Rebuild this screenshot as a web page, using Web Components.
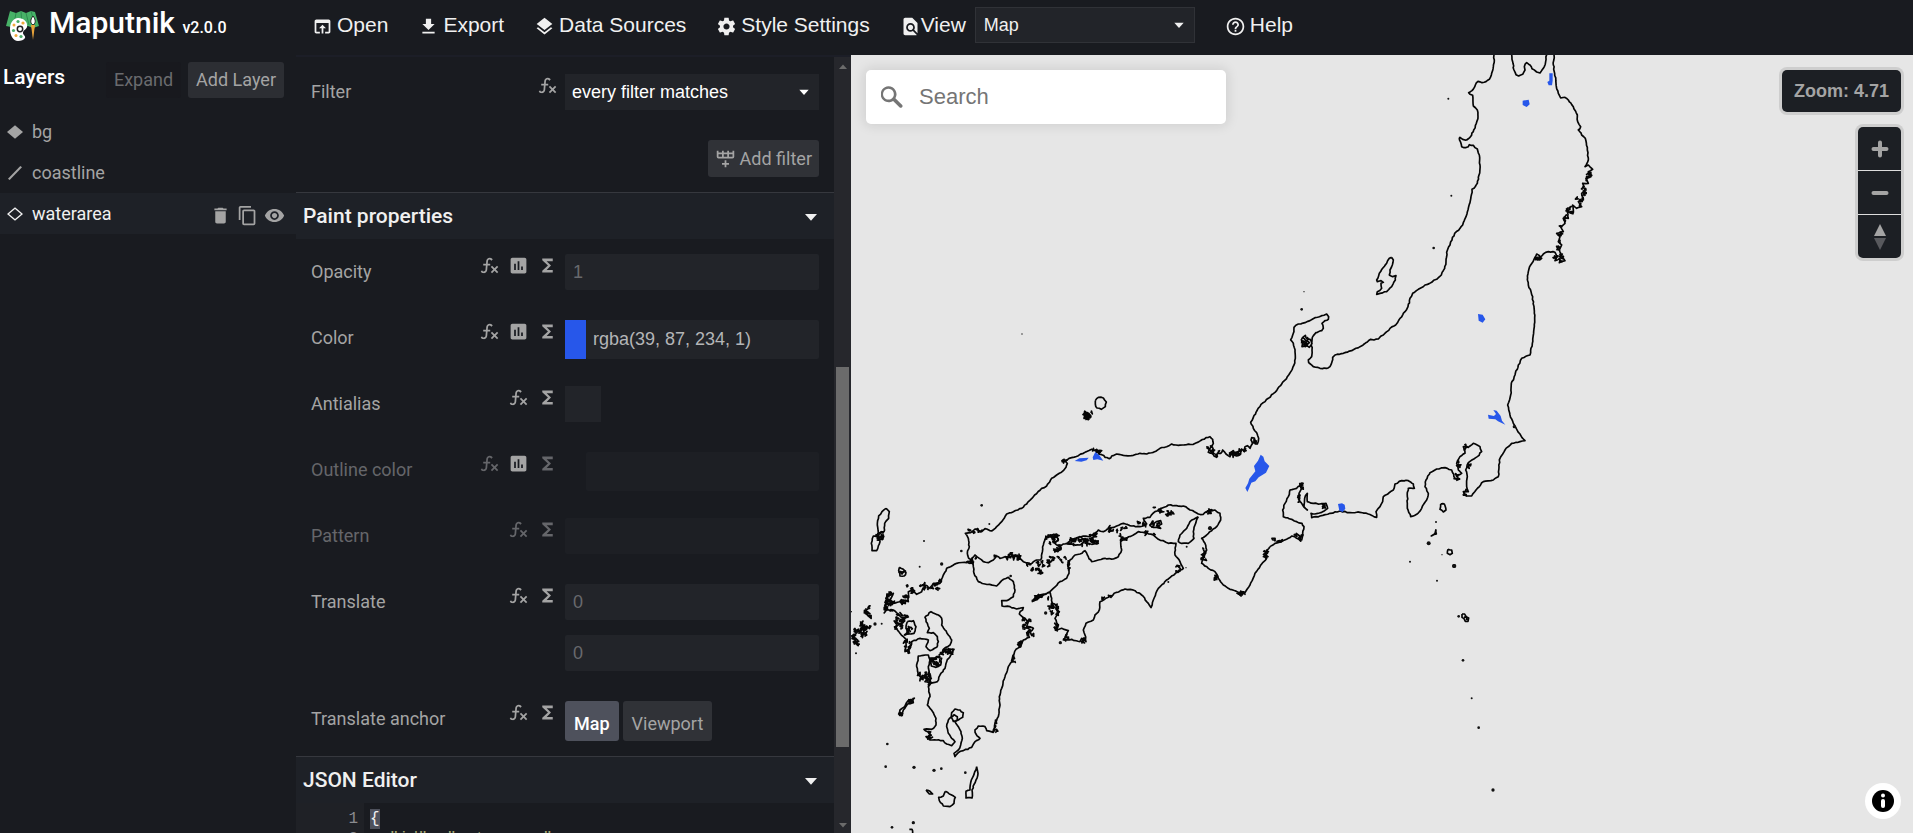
<!DOCTYPE html>
<html lang="en">
<head>
<meta charset="utf-8">
<title>Maputnik</title>
<style>
  html, body { height: 100%; }
  body { margin: 0; background: #191b20; color: #a4a4a4; font: 18px/24px Roboto, sans-serif; overflow: hidden; }
</style>
</head>
<body>
<maputnik-app></maputnik-app>
<script>
const ICONS = {
  open: 'M19 4H5c-1.11 0-2 .9-2 2v12c0 1.1.89 2 2 2h4v-2H5V8h14v10h-4v2h4c1.1 0 2-.9 2-2V6c0-1.1-.89-2-2-2zm-7 6l-4 4h3v6h2v-6h3l-4-4z',
  download: 'M19 9h-4V3H9v6H5l7 7 7-7zM5 18v2h14v-2H5z',
  layers: 'M11.99 18.54l-7.37-5.73L3 14.07l9 7 9-7-1.63-1.27-7.38 5.74zM12 16l7.36-5.73L21 9l-9-7-9 7 1.63 1.27L12 16z',
  settings: 'M19.43 12.98c.04-.32.07-.64.07-.98s-.03-.66-.07-.98l2.11-1.65c.19-.15.24-.42.12-.64l-2-3.46c-.12-.22-.39-.3-.61-.22l-2.49 1c-.52-.4-1.08-.73-1.69-.98l-.38-2.65C14.46 2.18 14.25 2 14 2h-4c-.25 0-.46.18-.49.42l-.38 2.65c-.61.25-1.17.59-1.69.98l-2.49-1c-.23-.09-.49 0-.61.22l-2 3.46c-.13.22-.07.49.12.64l2.11 1.65c-.04.32-.07.65-.07.98s.03.66.07.98l-2.11 1.65c-.19.15-.24.42-.12.64l2 3.46c.12.22.39.3.61.22l2.49-1c.52.4 1.08.73 1.69.98l.38 2.65c.03.24.24.42.49.42h4c.25 0 .46-.18.49-.42l.38-2.65c.61-.25 1.17-.59 1.69-.98l2.49 1c.23.09.49 0 .61-.22l2-3.46c.12-.22.07-.49-.12-.64l-2.11-1.65zM12 15.5c-1.93 0-3.5-1.57-3.5-3.5s1.57-3.5 3.5-3.5 3.5 1.57 3.5 3.5-1.57 3.5-3.5 3.5z',
  find: 'M20 19.59V8l-6-6H6c-1.1 0-1.99.9-1.99 2L4 20c0 1.1.89 2 1.99 2H18c.45 0 .85-.15 1.19-.4l-4.43-4.43c-.8.52-1.74.83-2.76.83-2.76 0-5-2.24-5-5s2.24-5 5-5 5 2.24 5 5c0 1.02-.31 1.96-.83 2.75L20 19.59zM9 13c0 1.66 1.34 3 3 3s3-1.34 3-3-1.34-3-3-3-3 1.34-3 3z',
  help: 'M11 18h2v-2h-2v2zm1-16C6.48 2 2 6.48 2 12s4.48 10 10 10 10-4.48 10-10S17.52 2 12 2zm0 18c-4.41 0-8-3.59-8-8s3.59-8 8-8 8 3.59 8 8-3.59 8-8 8zm0-14c-2.21 0-4 1.79-4 4h2c0-1.1.9-2 2-2s2 .9 2 2c0 2-3 1.75-3 5h2c0-2.25 3-2.5 3-5 0-2.21-1.79-4-4-4z',
  trash: 'M6 19c0 1.1.9 2 2 2h8c1.1 0 2-.9 2-2V7H6v12zM19 4h-3.5l-1-1h-5l-1 1H5v2h14V4z',
  copy: 'M16 1H4c-1.1 0-2 .9-2 2v14h2V3h12V1zm3 4H8c-1.1 0-2 .9-2 2v14c0 1.1.9 2 2 2h11c1.1 0 2-.9 2-2V7c0-1.1-.9-2-2-2zm0 16H8V7h11v14z',
  eye: 'M12 4.5C7 4.5 2.73 7.61 1 12c1.73 4.39 6 7.5 11 7.5s9.27-3.11 11-7.5c-1.73-4.39-6-7.5-11-7.5zM12 17c-2.76 0-5-2.24-5-5s2.24-5 5-5 5 2.24 5 5-2.24 5-5 5zm0-8c-1.66 0-3 1.34-3 3s1.34 3 3 3 3-1.34 3-3-1.34-3-3-3z',
  sigma: 'M18 4H6v2l6.5 6L6 18v2h12v-3h-7l5-5-5-5h7z',
  chart: 'M19 3H5c-1.1 0-2 .9-2 2v14c0 1.1.9 2 2 2h14c1.1 0 2-.9 2-2V5c0-1.1-.9-2-2-2zM9 17H7v-7h2v7zm4 0h-2V7h2v10zm4 0h-2v-4h2v4z',
  fx: 'M12.42 5.29C11.32 5.19 10.35 6 10.25 7.11L10 10H12.82V12H9.82L9.38 17.07C9.18 19.27 7.24 20.9 5.04 20.7C3.79 20.59 2.66 19.9 2 18.83L3.5 17.33C3.83 18.38 4.96 18.97 6 18.63C6.78 18.39 7.33 17.7 7.4 16.89L7.82 12H4.82V10H8L8.27 6.93C8.46 4.73 10.39 3.1 12.6 3.28C13.86 3.39 15 4.09 15.66 5.17L14.16 6.67C13.91 5.9 13.23 5.36 12.42 5.29M22 13.65L20.59 12.24L17.76 15.07L14.93 12.24L13.5 13.65L16.35 16.5L13.5 19.31L14.93 20.72L17.76 17.89L20.59 20.72L22 19.31L19.17 16.5L22 13.65Z',
  rowplus: 'M22 10A2 2 0 0 1 20 12H4A2 2 0 0 1 2 10V3H4V5H8V3H10V5H14V3H16V5H20V3H22V10M4 10H8V7H4V10M10 10H14V7H10V10M20 10V7H16V10H20M11 14H13V17H16V19H13V22H11V19H8V17H11V14Z',
  background: 'M12 2L24 12 12 22 0 12z',
  line: 'M20 1.500L22.500 3.500 4 22.500 1.500 20.500z',
  fill: 'M12 2L24 12 12 22 0 12zM12 4.500L3 12 12 19.500 21 12z',
  search: 'M7.400 1.200a8 8 0 0 1 7 12l6.800 6.800a1.800 1.800 0 0 1-2.500 2.500l-6.600-6.600a8 8 0 1 1-4.700-14.700zm0 2.600a5.400 5.400 0 1 0 .1 0z',
  down: 'M4 8h16l-8 9z'
};
const icon = (name, size, cls = '') =>
  `<svg class="${cls}" width="${size}" height="${size}" viewBox="0 0 24 24" aria-hidden="true"><path fill="currentColor" fill-rule="evenodd" d="${ICONS[name]}"/></svg>`;

const BASE = `
  *, *::before, *::after { box-sizing: border-box; }
  button, input, select { font: inherit; color: inherit; margin: 0; border: 0; outline: 0; padding: 0; background: none; border-radius: 0; }
  svg { display: block; flex: none; }
  a { color: inherit; text-decoration: none; }
  h1, h2 { margin: 0; font-weight: 500; }
  select { appearance: none; }
`;

class BaseElement extends HTMLElement {
  connectedCallback() {
    if (this.shadowRoot) return;
    this.attachShadow({ mode: 'open' }).innerHTML = `<style>${BASE}${this.styles()}</style>${this.markup()}`;
  }
  styles() { return ''; }
  markup() { return '<slot></slot>'; }
}

customElements.define('maputnik-app', class extends BaseElement {
  styles() { return `
    :host { display: grid; grid-template: 55px minmax(0, 1fr) / 296px 555px minmax(0, 1fr); height: 100vh; }
    app-toolbar { grid-column: 1 / -1; }
  `; }
  markup() { return `
    <app-toolbar></app-toolbar>
    <layer-list></layer-list>
    <layer-editor></layer-editor>
    <map-view></map-view>
  `; }
});

customElements.define('toolbar-button', class extends BaseElement {
  styles() { return `
    :host { display: block; }
    button, a { display: flex; align-items: center; gap: 4px; padding: 0 15px; height: 50px; white-space: nowrap; cursor: pointer; }
    svg { margin-top: 3px; }
  `; }
  markup() {
    const tag = this.hasAttribute('href') ? ['a href="#help"', 'a'] : ['button type="button"', 'button'];
    return `<${tag[0]}>${icon(this.getAttribute('icon'), 21)}<span><slot></slot></span></${tag[1]}>`;
  }
});

customElements.define('app-toolbar', class extends BaseElement {
  styles() { return `
    :host { display: flex; align-items: flex-start; height: 55px; color: #f0f0f0; font: 21px/24px "Liberation Sans", sans-serif; }
    .brand { display: flex; width: 297px; flex: none; align-items: center; padding: 6px 0 0 5px; gap: 9px; color: #fff; font-family: Roboto, sans-serif; }
    h1 { font-size: 30px; line-height: 34px; white-space: nowrap; }
    h1 small { font-size: 16px; }
    .view { display: flex; align-items: center; height: 50px; padding: 0 15px; gap: 9px; }
    .view svg { margin-top: 3px; }
    .view label { display: flex; align-items: center; }
    .box { position: relative; width: 220px; height: 36px; color: #f0f0f0; }
    .box select { width: 100%; height: 100%; padding: 0 8px; background: #222429; border: 1px solid #303237; font-size: 18px; }
    .box svg { position: absolute; right: 9px; top: 11px; margin: 0; }
  `; }
  markup() { return `
    <a class="brand" href="#maputnik">
      <svg width="35" height="31" viewBox="0 0 35 31" aria-hidden="true">
        <path fill="#47b267" d="M5 1l6 2 5-2 5 2 5-2 4 1 4 14-6 2-5-2-6 2-6-2-5 1-5-1z"/>
        <path stroke="#2f8a50" fill="none" d="M11 3L9 14M16 1l1 15M21 3l3 12M26 1l4 15"/>
        <path fill="#fff" d="M13 8c6 0 10 4 9 9-1 3-4 3-4 6 0 2 3 3 2 5-1 2-4 3-7 3C8 31 5 25 5 19 5 12 9 8 13 8z"/>
        <circle cx="15" cy="19" r="2.700" fill="#fff" stroke="#222" stroke-width="1.500"/>
        <g fill="#4aae68"><circle cx="13" cy="11.500" r="1.600"/><circle cx="8.500" cy="20.500" r="1.600"/><circle cx="16" cy="26.500" r="1.600"/></g>
        <g fill="#f0a93c"><circle cx="18" cy="13" r="1.600"/><circle cx="9" cy="15" r="1.500"/><circle cx="11" cy="25.500" r="1.500"/></g>
        <path fill="#fff" stroke="#222" d="M28 6c3 4 3 7 0 9-3-2-3-5 0-9z"/>
        <path fill="#e8a33a" d="M26 15h4l-2 15z"/>
      </svg>
      <h1>Maputnik <small>v2.0.0</small></h1>
    </a>
    <toolbar-button icon="open">Open</toolbar-button>
    <toolbar-button icon="download">Export</toolbar-button>
    <toolbar-button icon="layers">Data Sources</toolbar-button>
    <toolbar-button icon="settings">Style Settings</toolbar-button>
    <div class="view">
      <label for="view">${icon('find', 21)}View</label>
      <span class="box"><select id="view"><option>Map</option><option>Inspect</option></select>${icon('down', 14)}</span>
    </div>
    <toolbar-button icon="help" href>Help</toolbar-button>
  `; }
});

customElements.define('layer-item', class extends BaseElement {
  styles() { return `
    :host { display: flex; align-items: center; height: 41px; padding: 0 11px 0 7px; gap: 9px; }
    :host([selected]) { background: #1e2127; color: #f0f0f0; }
    .name { flex: 1; text-align: left; line-height: 24px; }
    .actions { display: flex; gap: 6px; color: #a4a4a4; margin-top: 3px; }
  `; }
  markup() {
    const s = this.hasAttribute('selected');
    const acts = [['trash', 'Delete'], ['copy', 'Duplicate'], ['eye', 'Hide']];
    return `${icon(this.getAttribute('icon'), 16)}
      <button type="button" class="name"><slot></slot></button>
      ${s ? `<span class="actions">${acts.map(a => `<button type="button" aria-label="${a[1]}">${icon(a[0], 21)}</button>`).join('')}</span>` : ''}`;
  }
});

customElements.define('layer-list', class extends BaseElement {
  styles() { return `
    :host { display: block; min-width: 0; }
    header { display: flex; align-items: center; gap: 7px; padding: 7px 12px 13px 3px; }
    h2 { flex: 1; color: #fff; font-size: 21px; line-height: 24px; margin-top: -6px; }
    header button { height: 36px; padding: 0 8px; border-radius: 3px; background: #2c2e33; }
    header button.quiet { background: #18191e; color: #6a6b6e; }
  `; }
  markup() { return `
    <header><h2>Layers</h2><button type="button" class="quiet">Expand</button><button type="button">Add Layer</button></header>
    <layer-item icon="background">bg</layer-item>
    <layer-item icon="line">coastline</layer-item>
    <layer-item icon="fill" selected>waterarea</layer-item>
  `; }
});

customElements.define('editor-section', class extends BaseElement {
  styles() { return `
    :host { display: block; border-top: 1px solid #36383e; }
    button { display: flex; width: 100%; height: 46px; align-items: center; justify-content: space-between; padding: 0 14px 0 7px; background: #1e2127; color: #f0f0f0; font-size: 21px; line-height: 24px; font-weight: 500; }
    svg { margin-top: 2px; }
  `; }
  markup() { return `<button type="button" aria-expanded="true"><span>${this.getAttribute('heading')}</span>${icon('down', 18)}</button><slot></slot>`; }
});

customElements.define('field-row', class extends BaseElement {
  styles() { return `
    :host { display: grid; grid-template-columns: minmax(0, 1fr) auto 254px; padding: 15px; min-height: 66px; align-items: start; }
    .label { line-height: 36px; }
    .tools { display: flex; padding-right: 3px; }
    .tools button { width: 29px; height: 22px; display: grid; place-items: center; }
    .control { display: flex; gap: 4px; min-width: 0; font-family: "Liberation Sans", sans-serif; }
    .stack { flex-direction: column; gap: 15px; }
    input:not([type=checkbox]) { width: 100%; min-width: 0; height: 36px; padding: 0 8px; background: #222429; border-radius: 2px; }
    input::placeholder { color: #68696d; opacity: 1; }
    input[type=checkbox] { appearance: none; width: 36px; height: 36px; background: #222429; }
    .color { gap: 0; height: 36px; }
    .color i { width: 21px; height: 39px; background: #2757ea; flex: none; }
    .color.none i { background: none; }
    .color input:not([type=checkbox]) { height: 39px; color: #b4b5b7; padding-left: 7px; }
    .box { position: relative; width: 100%; height: 36px; color: #fff; }
    .box select { width: 100%; height: 100%; padding: 0 7px; background: #222429; }
    .box svg { position: absolute; right: 8px; top: 11px; }
    .choice { font-family: Roboto, sans-serif; }
    .choice button { height: 40px; padding: 5px 9px 0; border-radius: 3px; background: #303237; color: #a4a4a4; }
    .choice button[aria-pressed=true] { background: #4e515c; color: #fff; font-weight: 500; }
    :host([dim]) .label, :host([dim]) .tools button { color: #65666a; }
    :host([dim]) .tools .chart { color: #a4a4a4; }
    :host([dim]) input:not([type=checkbox]) { background: #1d1f24; }
  `; }
  markup() {
    const label = this.getAttribute('label');
    const kind = this.getAttribute('kind');
    const value = this.getAttribute('value') || '';
    const names = { fx: 'Zoom function', chart: 'Data function', sigma: 'Expression' };
    const tools = this.getAttribute('tools').split(' ')
      .map(t => `<button type="button" class="${t}" aria-label="${names[t]}">${icon(t, 21)}</button>`).join('');
    const controls = {
      number: `<div class="control"><input id="c" inputmode="decimal" placeholder="${value}"></div>`,
      text: `<div class="control"><input id="c" type="text"></div>`,
      pair: `<div class="control stack"><input id="c" inputmode="decimal" placeholder="0"><input aria-label="${label} y" inputmode="decimal" placeholder="0"></div>`,
      check: `<div class="control"><input id="c" type="checkbox"></div>`,
      color: `<div class="control color ${value ? '' : 'none'}"><i></i><input id="c" type="text" value="${value}"></div>`,
      select: `<div class="control"><span class="box"><select id="c"><option>${value}</option></select>${icon('down', 14)}</span></div>`,
      choice: `<div class="control choice" id="c" role="group" aria-label="${label}"><button type="button" aria-pressed="true">Map</button><button type="button" aria-pressed="false">Viewport</button></div>`
    };
    const caption = kind === 'choice' ? `<span class="label">${label}</span>` : `<label class="label" for="c">${label}</label>`;
    return `${caption}<span class="tools">${tools}</span>${controls[kind]}`;
  }
});

customElements.define('code-editor', class extends BaseElement {
  styles() { return `
    :host { display: block; height: 60px; overflow: hidden; background: linear-gradient(90deg, #1f2126 68px, #191b20 68px); font: 16px/20px "Liberation Mono", monospace; }
    ol { margin: 0; padding: 6px 0 0; list-style: none; }
    li { display: grid; grid-template-columns: 62px 1fr; column-gap: 12px; white-space: pre; }
    .n { text-align: right; color: #8a8b8f; }
    .cursor { display: inline-block; background: #4e515c; color: #f0f0f0; }
    .str { color: #a5a672; }
  `; }
  markup() { return `<ol>
    <li><span class="n">1</span><code-line><span class="cursor">{</span></code-line></li>
    <li><span class="n">2</span><code-line>  <span class="str">"id"</span>: <span class="str">"waterarea"</span>,</code-line></li>
  </ol>`; }
});
customElements.define('code-line', class extends BaseElement {
  styles() { return ':host { display: block; }'; }
});

customElements.define('layer-editor', class extends BaseElement {
  styles() { return `
    :host { display: flex; min-width: 0; overflow: hidden; border-top: 2px solid #1c1e27; }
    .pane { flex: 1; min-width: 0; overflow: hidden; padding-top: 2px; }
    .add { display: flex; justify-content: flex-end; padding: 15px; }
    .add button { display: flex; align-items: center; gap: 4px; height: 37px; padding: 0 7px; border-radius: 3px; background: #303237; }
    .bar { width: 17px; background: #26272c; display: grid; grid-template-rows: 16px 294px 380px 1fr 16px; justify-items: center; color: #6b6b6b; }
    .bar i { grid-row: 3; width: 13px; background: #6b6b6b; }
    .bar .up { transform: rotate(180deg); margin-top: 4px; }
    .bar .dn { grid-row: 5; margin-top: 2px; }
  `; }
  markup() { return `
    <div class="pane">
      <field-row label="Filter" kind="select" value="every filter matches" tools="fx"></field-row>
      <div class="add"><button type="button">${icon('rowplus', 21)}Add filter</button></div>
      <editor-section heading="Paint properties">
        <field-row label="Opacity" kind="number" value="1" tools="fx chart sigma"></field-row>
        <field-row label="Color" kind="color" value="rgba(39, 87, 234, 1)" tools="fx chart sigma"></field-row>
        <field-row label="Antialias" kind="check" tools="fx sigma"></field-row>
        <field-row label="Outline color" kind="color" tools="fx chart sigma" dim></field-row>
        <field-row label="Pattern" kind="text" tools="fx sigma" dim></field-row>
        <field-row label="Translate" kind="pair" tools="fx sigma"></field-row>
        <field-row label="Translate anchor" kind="choice" tools="fx sigma"></field-row>
      </editor-section>
      <editor-section heading="JSON Editor"><code-editor></code-editor></editor-section>
    </div>
    <div class="bar">${icon('down', 12, 'up')}<i></i>${icon('down', 12, 'dn')}</div>
  `; }
});

// Coast geometry, grouped by survey sheet; each sheet has its own origin at one third scale.
const SHEETS = [
  { at: [1280, 50], lines: [
    '642 14 643 30 640 50 634 75 628 88 618 95 606 98 594 94 586 105 576 122 566 128 570 133 578 136 580 168 592 180 594 200 589 220 580 245 570 262 560 270 548 268 540 262 538 265 545 290 552 293 565 290 568 284 580 286 592 297 598 315 600 345 597 375 592 400 582 415 576 418 573 440 570 458 566 470 558 500 548 525 540 535 524 550 516 570 510 585 500 607 498 635 494 655 484 675 470 688 455 697 435 705 415 718 398 730 390 745 384 770 375 785 360 805 347 825 330 835 310 855 295 867 282 870 272 868 262 876 240 890 215 902 190 910 165 915 158 922 156 935 150 950 140 955 120 955 100 950 86 938 85 930 95 920 96 900 95 880 97 862 108 848 125 842 130 835 126 820 135 812 145 808 146 800 140 792 125 797 105 803 90 812 75 818 55 822 42 832 40 850 36 862 32 870 40 880 45 905 46 925 42 945 36 960',
    '742 690 745 665 752 645 762 628 770 612 780 620 785 625 772 630 790 612 805 605 825 607 830 620 825 632 840 625 838 638 855 632 845 618 838 600 845 585 835 575 840 560 830 550 850 545 842 530 855 520 850 505 865 505 862 485 880 488 878 465 890 475 905 470 895 455 910 450 905 430 915 420 908 400 925 400 918 385 933 380 925 365 938 358 925 345 915 350 925 330 922 300 916 265 905 255 895 240 902 230 893 215 892 195 880 170 865 150 855 142 842 144 835 130 828 100 824 70 820 45 822 14',
    '695 14 698 35 702 60 708 74 716 78 728 73 735 60 733 50 740 38 750 45 756 56 770 66 780 69 790 55 797 35 800 14',
    '335 622 340 630 337 645 330 660 328 675 338 680 348 677 346 690 335 710 320 725 300 730 290 733 292 725 305 715 303 700 310 697 303 692 292 695 290 690 298 670 308 655 320 640 328 625 335 622',
    '68 862 76 856 80 866 90 868 96 880 88 892 80 886 66 890 70 876 64 870 68 862 88 878 72 884 84 870'
  ], busy: [[838,622,14,14,6],[770,622,8,7,2],[925,375,8,18,6],[912,415,6,18,5],[900,455,10,12,6],[870,482,9,10,5],[858,505,6,10,3],[845,540,6,14,3],[838,585,5,16,4],[78,876,10,12,6]],
    dots: [[505,146,3],[514,437,3],[461,594,4],[72,725,2],[65,778,4]] },
  { at: [1200, 280], lines: [
    '276 270 262 290 245 312 225 337 205 355 183 373 172 390 160 412 152 427 160 445 170 458 176 475 172 492 166 492 163 474 155 473 153 480 158 490 150 505 142 497 135 500 133 515 125 507 122 522 110 528 100 525 95 518 90 530 78 522 68 510 62 520 52 520 50 532 42 528 38 520 25 517 28 508 40 490 38 478 30 470 18 473 0 483',
    '210 800 225 790 245 785 265 775 275 768 290 775 305 780 308 760 312 740 306 730 290 725 275 718 250 710 248 690 255 670 265 650 270 630 290 625 305 612 305 625 297 640 298 660 308 675 322 690 312 680 314 655 322 640 322 665 340 670 360 672 378 670 383 685 365 697 345 702 333 700 335 713 360 708 390 700 420 693 450 698 480 697 505 702 530 712 528 695 540 680 548 665 550 650 580 630 585 612 605 602 625 602 640 612 643 625 625 625 622 650 622 685 632 710 650 703 665 685 680 660 685 640 675 620 678 600 690 578 710 567 735 563 755 570 765 595 775 598 772 585 785 580 775 570 770 550 780 530 795 520 790 500 805 502 820 490 840 500 845 515 832 530 805 548 797 570 802 590 800 620 805 635 790 635 800 648 815 648 828 630 850 605 880 600 895 590 897 560 900 535 915 510 935 490 960 485 975 482 960 462 943 435 930 405 923 375 932 345 934 310 945 285 955 255 965 235 990 225 997 190 1003 140 1003 100 998 50 985 15 982 0',
    '722 672 733 672 738 690 730 696 720 688 722 672', '744 808 755 810 757 820 750 824 742 820 744 808', '708 748 709 762 700 764 694 768 705 760 708 748'
  ], busy: [[105,522,12,7,6],[45,518,14,9,4],[130,510,9,7,3],[160,485,7,9,3],[300,618,7,8,5],[295,772,11,7,6],[200,825,6,16,4],[375,680,6,9,4],[300,655,5,14,3],[770,592,7,7,4],[797,638,7,5,3],[125,940,7,4,4],[30,697,10,5,3],[12,825,5,20,4],[775,550,5,16,3],[797,505,7,8,3],[238,782,20,3,3],[806,555,5,8,2]],
    dots: [[943,440,5],[708,726,3],[686,790,6],[726,824,2],[763,858,6],[630,845,3],[711,902,3],[30,744,5]] },
  { at: [850, 380], lines: [
    '1050 183 1030 193 1010 194 985 196 965 192 950 200 930 205 910 217 890 222 870 220 850 226 820 226 800 222 785 228 778 236 765 232 755 224 745 222 755 212 740 213 725 208 712 214 700 220 685 227 665 233 645 242 652 250 648 262 640 272 620 285 605 295 590 318 575 325 550 350 530 372 515 385 490 395 470 402 455 425 440 440 425 453 405 446 395 455 375 447 362 458 346 460 355 475 358 500 352 520 356 535 365 540 375 525 388 535 400 545 415 548 430 540 440 528 450 535 465 530 480 532 495 525 510 535 520 545 540 552 550 545 560 540 572 540 576 520 580 495 585 478 600 465 620 462 625 480 615 490 630 500 640 492 660 490 680 475 700 468 720 470 735 460 745 450 760 455 780 445 800 438 820 430 845 438 870 440 890 432 880 415 900 412 915 395 935 385 955 375 980 377 1000 378 1020 390 1045 402 1060 403 1075 392 1095 390 1110 400 1112 420 1100 440 1085 452 1070 465 1055 475 1065 490 1070 510 1060 530 1055 550 1075 565 1095 575 1105 595 1120 615 1140 628 1170 638 1185 638 1200 615 1215 580 1235 552 1250 535 1245 520 1260 500',
    '545 662 565 647 600 637 605 655 607 670 625 680 620 690 628 695 615 715 625 735 620 750 635 745 655 752 650 765 640 780 665 778 690 785 695 775 708 785 705 765 700 750 708 730 730 720 735 705 748 690 750 665 775 652 800 637 825 627 855 632 875 645 895 670 903 683 910 660 925 625 950 600 985 575 1000 565 990 545 975 525 978 490 955 490 940 482 925 478 910 465 890 458 865 455 850 465 830 475 812 485 815 510 805 530 790 537 765 535 745 540 725 545 715 530 705 512 690 522 675 525 660 540 655 560 657 580 650 595 630 605 610 625 600 635 575 650 545 665',
    '1045 410 1035 435 1030 455 1032 475 1015 490 995 490 985 485 990 465 1010 445 1020 425 1045 410',
    '898 435 915 428 932 422 935 432 922 438 932 445 905 440 898 435', '650 492 665 478 690 470 705 482 690 495 650 492',
    '108 385 118 395 116 415 104 430 102 455 86 460 82 435 86 408 96 395 108 385', '70 468 84 466 90 485 80 512 66 512 64 490 70 468 88 472 100 465 98 478 80 480',
    '736 62 745 52 760 54 769 66 766 80 754 88 741 84 736 72 736 62', '148 562 160 568 168 578 162 588 150 588 146 572 148 562'
  ], busy: [[712,107,11,10,20],[612,478,14,14,12],[622,505,9,10,8],[690,485,28,11,18],[730,475,14,15,16],[580,550,22,10,9],[565,572,12,9,5],[620,540,28,8,8],[495,530,16,8,7],[540,562,12,9,4],[800,450,30,10,7],[820,470,9,9,4],[875,430,12,10,6],[915,435,18,9,6],[960,400,11,4,6],[925,388,20,7,4],[88,468,10,10,8],[365,540,11,11,7],[470,532,40,5,6],[380,452,25,5,6],[900,460,22,5,4],[985,560,7,14,4],[1060,535,5,16,4],[1100,590,5,10,3],[1175,640,11,5,5],[1245,525,6,16,4],[1080,395,12,7,4],[730,212,24,4,5],[1085,210,9,11,5],[1155,222,13,5,6],[645,240,7,5,3],[655,552,5,14,3],[770,652,18,5,3],[575,652,22,4,8],[600,470,10,5,4],[155,575,7,8,4]],
    dots: [[395,376,4],[418,432,3],[222,483,3],[209,560,3],[334,513,4],[275,552,5],[482,588,4],[955,606,3],[1008,563,2],[1010,500,3],[1080,445,6],[2,695,2]] },
  { at: [850, 560], lines: [
    '365 0 370 20 372 40 385 65 405 72 440 78 455 62 475 52 490 65 495 90 490 110 470 122 455 122 456 138 480 140 500 147 520 143 508 162 525 175 535 185 530 200 550 205 535 220 538 232 520 240 512 260 498 268 488 290 485 305 475 320 465 350 455 385 448 410 450 435 445 470 435 490 430 517 410 512 405 500 385 498 375 510 378 522 390 535 375 545 365 562 340 572 325 578 315 590 312 580 325 570 332 555 337 535 333 515 325 500 315 485 325 480 338 472 340 458 330 450 315 447 305 458 304 470 295 480 290 500 295 520 305 535 315 545 305 557 290 552 280 542 260 540 240 540 238 520 222 508 245 508 258 495 258 475 250 458 240 445 232 435 240 410 235 380 238 370 225 365 235 350',
    '365 5 320 10 290 25 280 45 270 70 250 70 240 85 225 75 215 95 200 103 190 90 175 95 175 125 160 120 130 130 120 120 130 100 110 110 105 150 130 150 160 175 155 190 135 200 150 220 170 240 165 275 180 265 185 245 210 235 235 240 228 260 240 272 260 262 265 245 262 230 250 218 232 218 238 205 232 190 225 172 243 155 265 165 275 175 275 195 285 210 295 225 305 240 300 255 280 268 312 268 300 290 290 305 285 325 270 345 262 365 240 370 240 345 235 320 240 300 235 285 205 288 200 320 205 345 215 355',
    '304 472 312 464 322 470 322 480 310 484 304 472', '240 300 260 290 275 295 272 315 258 322 244 318 240 300', '172 185 190 182 198 200 192 220 176 222 168 205 172 185',
    '286 694 298 702 316 712 312 730 300 740 280 738 268 722 266 712 280 708 286 694', '380 620 384 640 378 660 366 690 366 714 348 714 348 694 360 690 364 660 374 636 380 620',
    '185 418 190 428 176 430 160 450 156 466 146 462 150 450 164 440 174 422 185 418', '228 690 240 694 248 702 238 702 228 690', '178 808 186 808 188 819'
  ], busy: [[115,140,14,22,16],[165,120,12,12,9],[180,90,10,14,6],[155,175,18,16,14],[145,195,12,14,9],[180,210,12,12,8],[172,255,7,20,8],[52,155,7,18,9],[45,195,14,10,11],[30,218,18,12,16],[15,240,10,14,11],[235,80,30,9,9],[262,65,9,7,4],[225,350,20,11,14],[262,305,16,14,12],[285,275,17,6,8],[300,275,9,7,3],[530,190,10,16,9],[540,215,7,14,5],[510,255,6,14,5],[488,295,4,14,4],[612,150,14,16,13],[620,200,7,11,6],[438,500,4,18,4],[238,525,5,16,6],[183,424,7,5,5],[153,458,4,6,3],[118,110,10,12,5],[700,242,7,5,3],[650,232,7,9,3],[240,365,7,7,4]],
    dots: [[95,191,3],[75,192,5],[18,280,3],[587,159,5],[631,248,5],[112,552,4],[107,620,4],[192,622,5],[252,631,5],[274,626,4],[346,638,4],[190,788,5],[126,802,4],[4,155,2]] },
  { at: [1440, 560], lines: ['66 162 74 162 78 170 86 174 84 184 76 184 72 176 66 172 66 162', '72 172 80 170 80 180'], busy: [],
    dots: [[42,18,6],[56,169,4],[69,301,4],[95,415,3],[116,503,4],[159,690,5]] },
  { at: [1010, 320], lines: [], busy: [], dots: [[36,42,2]] }
];
const LAKES = [
  [1280, 50, 'M808 70h10v22l-2 14h-10l-4-10 6-4zM728 152l18-3 3 14-9 8-12-6zM594 792l14 2 8 14-8 10-12-6z'],
  [1200, 280, 'M182 524l8 6 4 14 14 14-10 20-22 14-10 12-12 4-8 20-4 8-6-12 8-14 4-14 18-22-4-16 12-16zM864 404l18 4 6-6-8-12 10 2 12 16 4 14 10 12-22-10-8-6-20-2zM414 672l12-2 8 4 2 12-8 10-10-4z'],
  [850, 380, 'M674 243l14-8 28-2-6 8-16 4zM728 232l8-16 12 10 12 16-18-4-12 2z']
];

customElements.define('coast-chart', class extends BaseElement {
  styles() { return `
    :host { display: block; width: 100%; height: 100%; }
    svg { width: 100%; height: 100%; }
    .ln { fill: none; stroke: #050505; stroke-width: 5; stroke-linejoin: round; }
    .dot { fill: #111; }
    .lake { fill: #2757ea; }
  `; }
  markup() {
    let seed = 7;
    const rnd = () => (seed = (seed * 16807) % 2147483647) / 2147483647;
    // Splits each stretch of coast and nudges the new vertices, so that the shore reads as irregular.
    const rough = s => {
      const p = s.split(' ').map(Number);
      let d = `M${p[0]} ${p[1]}`;
      for (let i = 2; i < p.length; i += 2) {
        const [x0, y0, x1, y1] = p.slice(i - 2, i + 2);
        const n = Math.max(1, Math.round(Math.hypot(x1 - x0, y1 - y0) / 7));
        for (let k = 1; k <= n; k++) {
          const j = k < n ? 3 : 0;
          d += `L${(x0 + (x1 - x0) * k / n + (rnd() - .5) * j).toFixed(1)} ${(y0 + (y1 - y0) * k / n + (rnd() - .5) * j).toFixed(1)}`;
        }
      }
      return d;
    };
    const cluster = ([cx, cy, rx, ry, n]) => {
      let d = '';
      for (let i = 0; i < n; i++) {
        const x = cx + (rnd() - .5) * 2 * rx, y = cy + (rnd() - .5) * 2 * ry;
        d += `M${x.toFixed(1)} ${y.toFixed(1)}`;
        for (let k = 0; k < 4; k++) d += `L${(x + (rnd() - .5) * 11).toFixed(1)} ${(y + (rnd() - .5) * 11).toFixed(1)}`;
      }
      return d;
    };
    const sheets = SHEETS.map(s => `<g transform="translate(${s.at}) scale(.33333)">
      <path class="ln" d="${s.lines.map(rough).join('')}"/><path class="ln" d="${s.busy.map(cluster).join('')}"/>
      ${s.dots.map(c => `<circle class="dot" cx="${c[0]}" cy="${c[1]}" r="${c[2]}"/>`).join('')}</g>`).join('');
    const lakes = LAKES.map(l => `<path class="lake" transform="translate(${l[0]} ${l[1]}) scale(.33333)" d="${l[2]}"/>`).join('');
    return `<svg viewBox="851 55 1062 778" preserveAspectRatio="xMidYMid slice" role="img" aria-label="Map of Japan">${sheets}${lakes}</svg>`;
  }
});

customElements.define('map-view', class extends BaseElement {
  styles() { return `
    :host { display: block; position: relative; overflow: hidden; background: #e6e6e6; font-family: "Liberation Sans", sans-serif; }
    .search { position: absolute; left: 15px; top: 15px; width: 360px; height: 54px; display: flex; align-items: center; gap: 14px; padding-left: 15px; background: #fff; border-radius: 5px; box-shadow: 0 0 12px 2px rgba(0, 0, 0, .1); color: #757575; }
    .search input { flex: 1; min-width: 0; height: 100%; font-size: 22px; }
    .search input::placeholder { color: #757575; opacity: 1; }
    .side { position: absolute; top: 15px; right: 12px; display: flex; flex-direction: column; align-items: flex-end; gap: 15px; }
    .zoom, .nav { background: #1c1f24; border-radius: 5px; box-shadow: 0 0 0 3px rgba(0, 0, 0, .1); }
    .zoom { padding: 0 12px; line-height: 42px; font-weight: 700; }
    .nav { display: flex; flex-direction: column; width: 43px; }
    .nav button { height: 43px; display: grid; place-items: center; }
    .nav button + button { border-top: 1px solid #ddd; height: 44px; }
    .info { position: absolute; right: 12px; bottom: 14px; width: 36px; height: 36px; border-radius: 50%; background: #fff; display: grid; place-items: center; color: #000; }
  `; }
  markup() { return `
    <coast-chart></coast-chart>
    <label class="search">${icon('search', 24)}<input type="text" aria-label="Search" placeholder="Search"></label>
    <div class="side">
      <div class="zoom">Zoom: 4.71</div>
      <div class="nav">
        <button type="button" aria-label="Zoom in"><svg width="18" height="18" viewBox="0 0 18 18"><path stroke="#a4a4a4" stroke-width="4" stroke-linecap="round" d="M9 2.500v13M2.500 9h13"/></svg></button>
        <button type="button" aria-label="Zoom out"><svg width="18" height="18" viewBox="0 0 18 18"><path stroke="#a4a4a4" stroke-width="4" stroke-linecap="round" d="M2.500 9h13"/></svg></button>
        <button type="button" aria-label="Reset bearing"><svg width="12" height="26" viewBox="0 0 12 26"><path fill="#a4a4a4" d="M6 0l6 12H0z"/><path fill="#58595d" d="M6 26L0 14h12z"/></svg></button>
      </div>
    </div>
    <button type="button" class="info" aria-label="Attribution"><svg width="22" height="22" viewBox="0 0 22 22"><circle cx="11" cy="11" r="11"/><circle cx="11" cy="5.500" r="2" fill="#fff"/><path stroke="#fff" stroke-width="4" stroke-linecap="round" d="M11 11v5"/></svg></button>
  `; }
});
</script>
</body>
</html>
